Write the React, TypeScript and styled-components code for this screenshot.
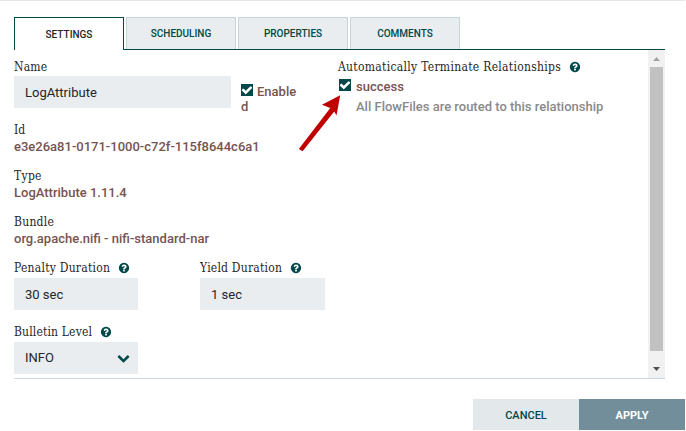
import React from "react";
import styled, { createGlobalStyle, css } from "styled-components";

const GlobalStyle = createGlobalStyle`
  *, *::before, *::after { box-sizing: border-box; }
  body { margin: 0; background: #fff; font-family: Roboto, sans-serif; font-size: 13px; color: #262626; overflow: hidden; }
`;

const Dialog = styled.main`
  position: relative;
  display: flex;
  flex-direction: column;
  width: 685px;
  height: 430px;
  border-top: 1px solid #e3e8eb;
`;

const TabBar = styled.nav`
  display: flex;
  gap: 2px;
  height: 33px;
  margin: 16px 20px 0 14px;
  box-shadow: inset 0 -1px #004849;
`;

const Tab = styled.button<{ $active?: boolean }>`
  width: 110px;
  height: 32px;
  padding: 0;
  border: 1px solid #c7d7d9;
  border-bottom: 0;
  background: #e9edf0;
  color: #004849;
  font: 500 10px/31px Roboto, sans-serif;
  ${(p) =>
    p.$active &&
    css`
      height: 33px;
      border-color: #004849;
      background: #fff;
      color: #262626;
    `}
`;

const Body = styled.div`
  display: flex;
  height: 329px;
  margin: 0 20px 0 14px;
  border-bottom: 1px solid #c7d7dd;
`;

const Left = styled.section`
  width: 324px;
  padding-top: 8px;
`;

const Right = styled.section`
  width: 310px;
  padding-top: 8px;
`;

const Label = styled.div<{ $track?: number; $after?: number }>`
  display: flex;
  align-items: center;
  height: 18px;
  margin-bottom: ${(p) => p.$after ?? 0}px;
  white-space: nowrap;
  font: 12px/18px "Roboto Slab", "DejaVu Serif Condensed", "DejaVu Serif", serif;
  font-stretch: condensed;
  letter-spacing: ${(p) => p.$track ?? 0}px;
`;

const Field = styled.div`
  display: flex;
  flex-direction: column;
  height: 46px;
`;

const Value = styled.div`
  height: 16px;
  line-height: 16px;
  color: #775351;
  font-weight: 500;
`;

const Row = styled.div<{ $height: number }>`
  display: flex;
  height: ${(p) => p.$height}px;
`;

const Cell = styled.div<{ $width: number }>`
  width: ${(p) => p.$width}px;
`;

const Input = styled.div<{ $width: number }>`
  display: flex;
  align-items: center;
  justify-content: space-between;
  width: ${(p) => p.$width}px;
  height: 32px;
  padding: 2px 8px 0 11px;
  background: #e9edf0;
  line-height: 30px;
`;

const Select = styled(Input)`
  padding: 0 8px 0 11px;
`;

const EnableBox = styled.div`
  display: flex;
  width: 72px;
  padding: 26px 0 0 10px;
`;

const EnableText = styled.div`
  width: 60px;
  margin-left: -12px;
  text-indent: 16px;
  line-height: 15px;
  color: #775351;
  font-weight: 500;
`;

const Check = styled.span`
  display: flex;
  flex: none;
  align-items: center;
  justify-content: center;
  width: 12px;
  height: 12px;
  background: #004849;
  color: #fff;
`;

const Relationship = styled.div`
  display: flex;
  gap: 5px;
  padding: 3px 0 0 1px;
`;

const Description = styled.div`
  margin: 4px 0 0 18px;
  line-height: 16px;
  color: #8a8a8a;
  font-weight: 500;
`;

const ScrollTrack = styled.div`
  display: flex;
  flex-direction: column;
  align-items: center;
  justify-content: space-between;
  width: 17px;
  height: 328px;
  background: #f1f1f1;
`;

const Thumb = styled.div`
  width: 13px;
  height: 284px;
  background: #c1c1c1;
`;

const ArrowBox = styled.svg<{ $height: number }>`
  display: block;
  width: 17px;
  height: ${(p) => p.$height}px;
`;

const Icon = styled.svg<{ $size: number; $gap?: number }>`
  display: block;
  flex: none;
  width: ${(p) => p.$size}px;
  height: ${(p) => p.$size}px;
  margin-left: ${(p) => p.$gap ?? 0}px;
  fill: currentColor;
`;

const Footer = styled.footer`
  display: flex;
  justify-content: flex-end;
  margin-top: 20px;
`;

const Action = styled.button<{ $primary?: boolean }>`
  width: 106px;
  height: 31px;
  padding: 2px 0 0;
  border: 0;
  background: ${(p) => (p.$primary ? "#728e9b" : "#e3e8eb")};
  color: ${(p) => (p.$primary ? "#fff" : "#004849")};
  font: ${(p) => (p.$primary ? 700 : 500)} 11px/29px Roboto, sans-serif;
`;

const Pointer = styled.svg`
  position: absolute;
  left: 290px;
  top: 88px;
  width: 60px;
  height: 70px;
`;

const HelpIcon = () => (
  <Icon $size={12} $gap={8} viewBox="0 0 1792 1792" color="#004849">
    <path d="M1024 1376v-192q0-14-9-23t-23-9h-192q-14 0-23 9t-9 23v192q0 14 9 23t23 9h192q14 0 23-9t9-23zm256-672q0-88-55.5-163t-138.5-116-170-41q-243 0-371 213-15 24 8 42l132 100q7 6 19 6 16 0 25-12 53-68 86-92 34-24 86-24 48 0 85.5 26t37.5 59q0 38-20 61t-68 45q-63 28-115.5 86.5t-52.5 125.5v36q0 14 9 23t23 9h192q14 0 23-9t9-23q0-19 21.5-49.5t54.5-49.5q32-18 49-28.5t46-35 44.5-48 28-60.5 12.5-81zm384 192q0 209-103 385.5t-279.5 279.5-385.5 103-385.5-103-279.5-279.5-103-385.5 103-385.5 279.5-279.5 385.5-103 385.5 103 279.5 279.5 103 385.5z" />
  </Icon>
);

const CheckMark = () => (
  <Check>
    <Icon $size={12} viewBox="0 0 1792 1792">
      <path d="M1671 566q0 40-28 68l-724 724-136 136q-28 28-68 28t-68-28l-136-136-362-362q-28-28-28-68t28-68l136-136q28-28 68-28t68 28l294 295 656-657q28-28 68-28t68 28l136 136q28 28 28 68z" />
    </Icon>
  </Check>
);

const Chevron = () => (
  <Icon $size={13} viewBox="0 100 1792 1792" color="#004849">
    <path d="M1683 808l-742 741q-19 19-45 19t-45-19l-742-741q-19-19-19-45.5t19-45.5l166-165q19-19 45-19t45 19l531 531 531-531q19-19 45-19t45 19l166 165q19 19 19 45.5t-19 45.5z" />
  </Icon>
);

export default function App() {
  return (
    <>
      <GlobalStyle />
      <Dialog>
        <TabBar>
          <Tab $active>SETTINGS</Tab>
          <Tab>SCHEDULING</Tab>
          <Tab>PROPERTIES</Tab>
          <Tab>COMMENTS</Tab>
        </TabBar>
        <Body>
          <Left>
            <Row $height={63}>
              <Cell $width={217}>
                <Label $track={0.2}>Name</Label>
                <Input $width={217}>LogAttribute</Input>
              </Cell>
              <EnableBox>
                <CheckMark />
                <EnableText>Enable<br />d</EnableText>
              </EnableBox>
            </Row>
            <Field>
              <Label>Id</Label>
              <Value>e3e26a81-0171-1000-c72f-115f8644c6a1</Value>
            </Field>
            <Field>
              <Label $track={0.3}>Type</Label>
              <Value>LogAttribute 1.11.4</Value>
            </Field>
            <Field>
              <Label $track={0.25}>Bundle</Label>
              <Value>org.apache.nifi - nifi-standard-nar</Value>
            </Field>
            <Row $height={64}>
              <Cell $width={186}>
                <Label $track={0.24} $after={1}>Penalty Duration<HelpIcon /></Label>
                <Input $width={124}>30 sec</Input>
              </Cell>
              <Cell $width={125}>
                <Label $track={0.22} $after={1}>Yield Duration<HelpIcon /></Label>
                <Input $width={125}>1 sec</Input>
              </Cell>
            </Row>
            <Label $track={0.16} $after={1}>Bulletin Level<HelpIcon /></Label>
            <Select $width={124}>INFO<Chevron /></Select>
          </Left>
          <Right>
            <Label $track={0.3}>Automatically Terminate Relationships<HelpIcon /></Label>
            <Relationship>
              <CheckMark />
              <Value>success</Value>
            </Relationship>
            <Description>All FlowFiles are routed to this relationship</Description>
          </Right>
          <ScrollTrack>
            <ArrowBox $height={17} viewBox="0 0 17 17">
              <path d="M5 11h7L8.5 7z" fill="#a3a3a3" />
            </ArrowBox>
            <Thumb />
            <ArrowBox $height={27} viewBox="0 0 17 27">
              <path d="M5 16h7l-3.500 4z" fill="#505050" />
            </ArrowBox>
          </ScrollTrack>
        </Body>
        <Footer>
          <Action>CANCEL</Action>
          <Action $primary>APPLY</Action>
        </Footer>
        <Pointer viewBox="0 0 60 70">
          <path d="M50.200 6.200L32 15.700L40.300 19L8.800 60L12.600 62.300L44.200 22.500L46.500 26.500Z" fill="#c00000" />
        </Pointer>
      </Dialog>
    </>
  );
}
